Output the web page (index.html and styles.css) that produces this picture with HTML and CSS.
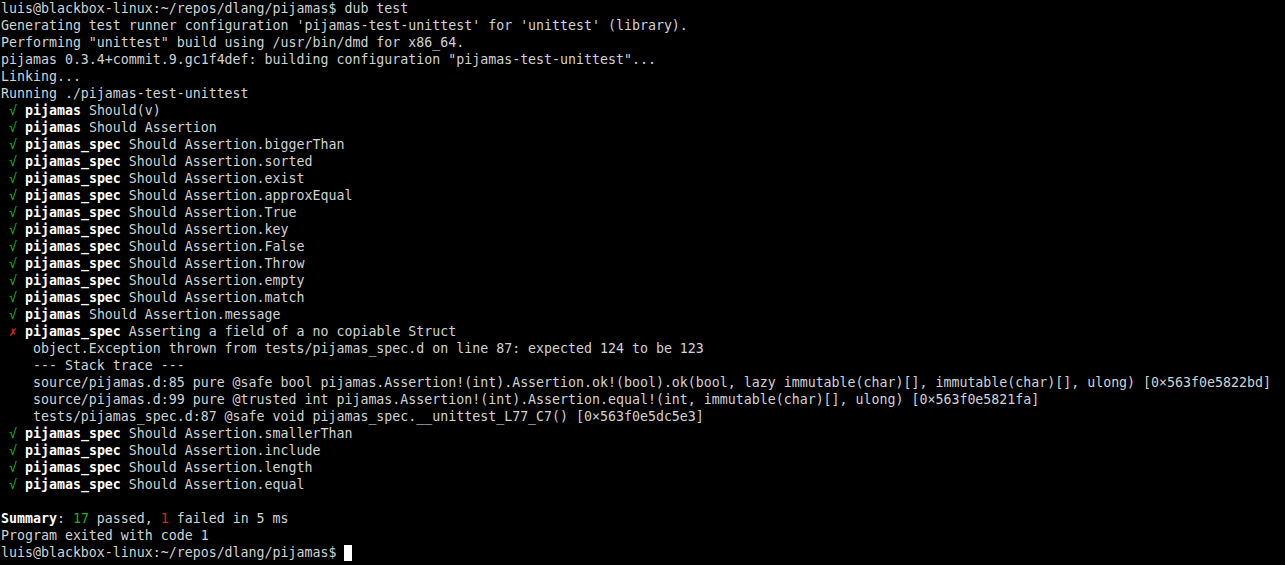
FILE: index.html
```html
<!DOCTYPE html>
<html>
<head>
<meta charset="utf-8">
<link rel="stylesheet" href="styles.css">
</head>
<body>
<div class="term">
<div class="ln">luis@blackbox-linux:~/repos/dlang/pijamas$ dub test</div>
<div class="ln">Generating test runner configuration 'pijamas-test-unittest' for 'unittest' (library).</div>
<div class="ln">Performing "unittest" build using /usr/bin/dmd for x86_64.</div>
<div class="ln">pijamas 0.3.4+commit.9.gc1f4def: building configuration "pijamas-test-unittest"...</div>
<div class="ln">Linking...</div>
<div class="ln">Running ./pijamas-test-unittest</div>
<div class="ln"> <span class="ok">√</span> <b>pijamas</b> Should(v)</div>
<div class="ln"> <span class="ok">√</span> <b>pijamas</b> Should Assertion</div>
<div class="ln"> <span class="ok">√</span> <b>pijamas_spec</b> Should Assertion.biggerThan</div>
<div class="ln"> <span class="ok">√</span> <b>pijamas_spec</b> Should Assertion.sorted</div>
<div class="ln"> <span class="ok">√</span> <b>pijamas_spec</b> Should Assertion.exist</div>
<div class="ln"> <span class="ok">√</span> <b>pijamas_spec</b> Should Assertion.approxEqual</div>
<div class="ln"> <span class="ok">√</span> <b>pijamas_spec</b> Should Assertion.True</div>
<div class="ln"> <span class="ok">√</span> <b>pijamas_spec</b> Should Assertion.key</div>
<div class="ln"> <span class="ok">√</span> <b>pijamas_spec</b> Should Assertion.False</div>
<div class="ln"> <span class="ok">√</span> <b>pijamas_spec</b> Should Assertion.Throw</div>
<div class="ln"> <span class="ok">√</span> <b>pijamas_spec</b> Should Assertion.empty</div>
<div class="ln"> <span class="ok">√</span> <b>pijamas_spec</b> Should Assertion.match</div>
<div class="ln"> <span class="ok">√</span> <b>pijamas</b> Should Assertion.message</div>
<div class="ln"> <span class="fail">✗</span> <b>pijamas_spec</b> Asserting a field of a no copiable Struct</div>
<div class="ln">    object.Exception thrown from tests/pijamas_spec.d on line 87: expected 124 to be 123</div>
<div class="ln">    --- Stack trace ---</div>
<div class="ln">    source/pijamas.d:85 pure @safe bool pijamas.Assertion!(int).Assertion.ok!(bool).ok(bool, lazy immutable(char)[], immutable(char)[], ulong) [0×563f0e5822bd]</div>
<div class="ln">    source/pijamas.d:99 pure @trusted int pijamas.Assertion!(int).Assertion.equal!(int, immutable(char)[], ulong) [0×563f0e5821fa]</div>
<div class="ln">    tests/pijamas_spec.d:87 @safe void pijamas_spec.__unittest_L77_C7() [0×563f0e5dc5e3]</div>
<div class="ln"> <span class="ok">√</span> <b>pijamas_spec</b> Should Assertion.smallerThan</div>
<div class="ln"> <span class="ok">√</span> <b>pijamas_spec</b> Should Assertion.include</div>
<div class="ln"> <span class="ok">√</span> <b>pijamas_spec</b> Should Assertion.length</div>
<div class="ln"> <span class="ok">√</span> <b>pijamas_spec</b> Should Assertion.equal</div>
<div class="ln"></div>
<div class="ln"><b>Summary</b>: <span class="ok">17</span> passed, <span class="fail">1</span> failed in 5 ms</div>
<div class="ln">Program exited with code 1</div>
<div class="ln">luis@blackbox-linux:~/repos/dlang/pijamas$ <span class="cursor"></span></div>
</div>
</body>
</html>
```
FILE: styles.css
```css
html, body {
  margin: 0;
  padding: 0;
  background: #000;
  height: 100%;
}
.term {
  padding: 0 1px;
  font-family: "DejaVu Sans Mono", "Liberation Mono", monospace;
  font-size: 13.28px;
  line-height: 17px;
  color: #d0d2d4;
}
.ln {
  height: 17px;
  white-space: pre;
  overflow: hidden;
}
.ln b {
  color: #ffffff;
  font-weight: bold;
}
.ok {
  color: #1fb21f;
}
.fail {
  color: #d12727;
}
.cursor {
  display: inline-block;
  width: 8px;
  height: 16px;
  background: #ffffff;
  vertical-align: -4px;
}
```
